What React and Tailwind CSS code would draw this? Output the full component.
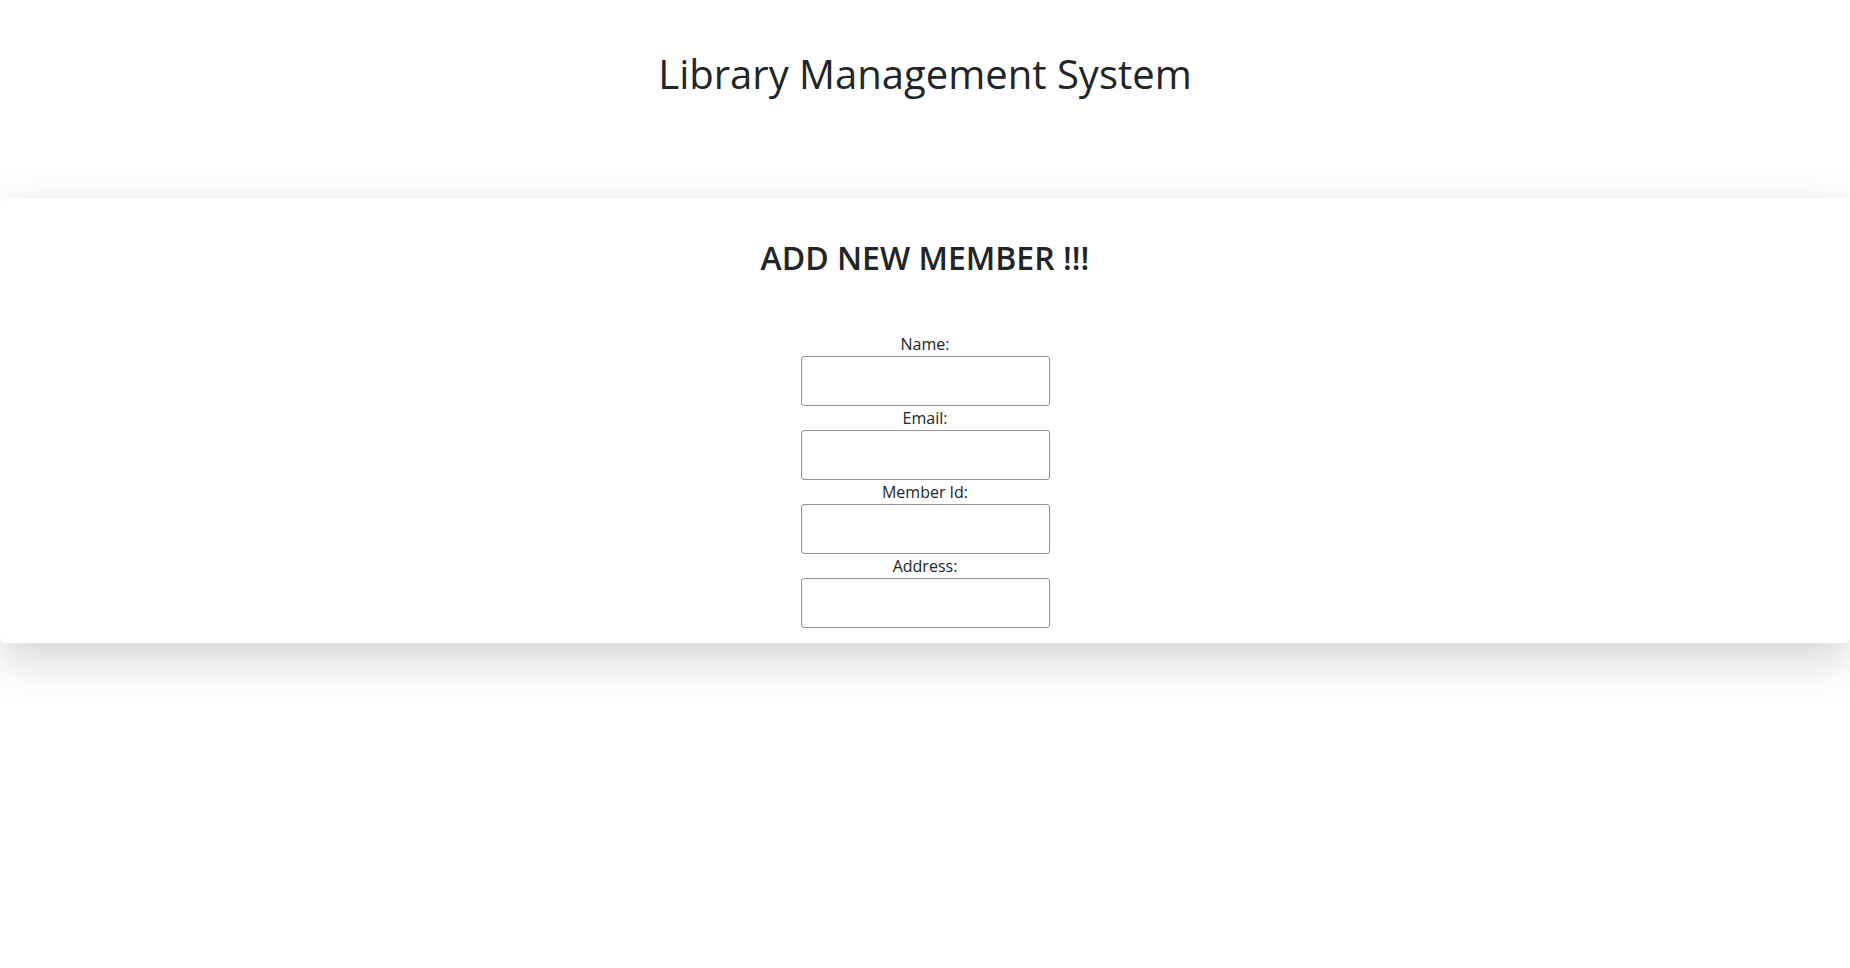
import React from "react";

const fields = ["Name:", "Email:", "Member Id:", "Address:"];

const App = () => {
  return (
    <div className="min-h-screen bg-white text-[#212529] font-['Open_Sans',sans-serif]">
      <header className="pt-[50px] pb-[100px] text-center">
        <h1 className="text-[40px] leading-[48px] font-medium">Library Management System</h1>
      </header>

      <section className="bg-white rounded-md shadow-[0_16px_48px_rgba(0,0,0,0.175)] pt-[41px] pb-[15px]">
        <h2 className="text-center text-[32px] leading-[38px] font-semibold">ADD NEW MEMBER !!!</h2>

        <form className="mt-[55px] flex flex-col items-center">
          {fields.map((label, index) => (
            <div key={index} className="flex flex-col items-center">
              <label className="text-[16px] leading-[24px]">{label}</label>
              <input
                type="text"
                className="w-[249px] h-[50px] border border-[#8f8f9d] rounded-[3px] px-2 outline-none"
              />
            </div>
          ))}
        </form>
      </section>
    </div>
  );
};

export default App;
